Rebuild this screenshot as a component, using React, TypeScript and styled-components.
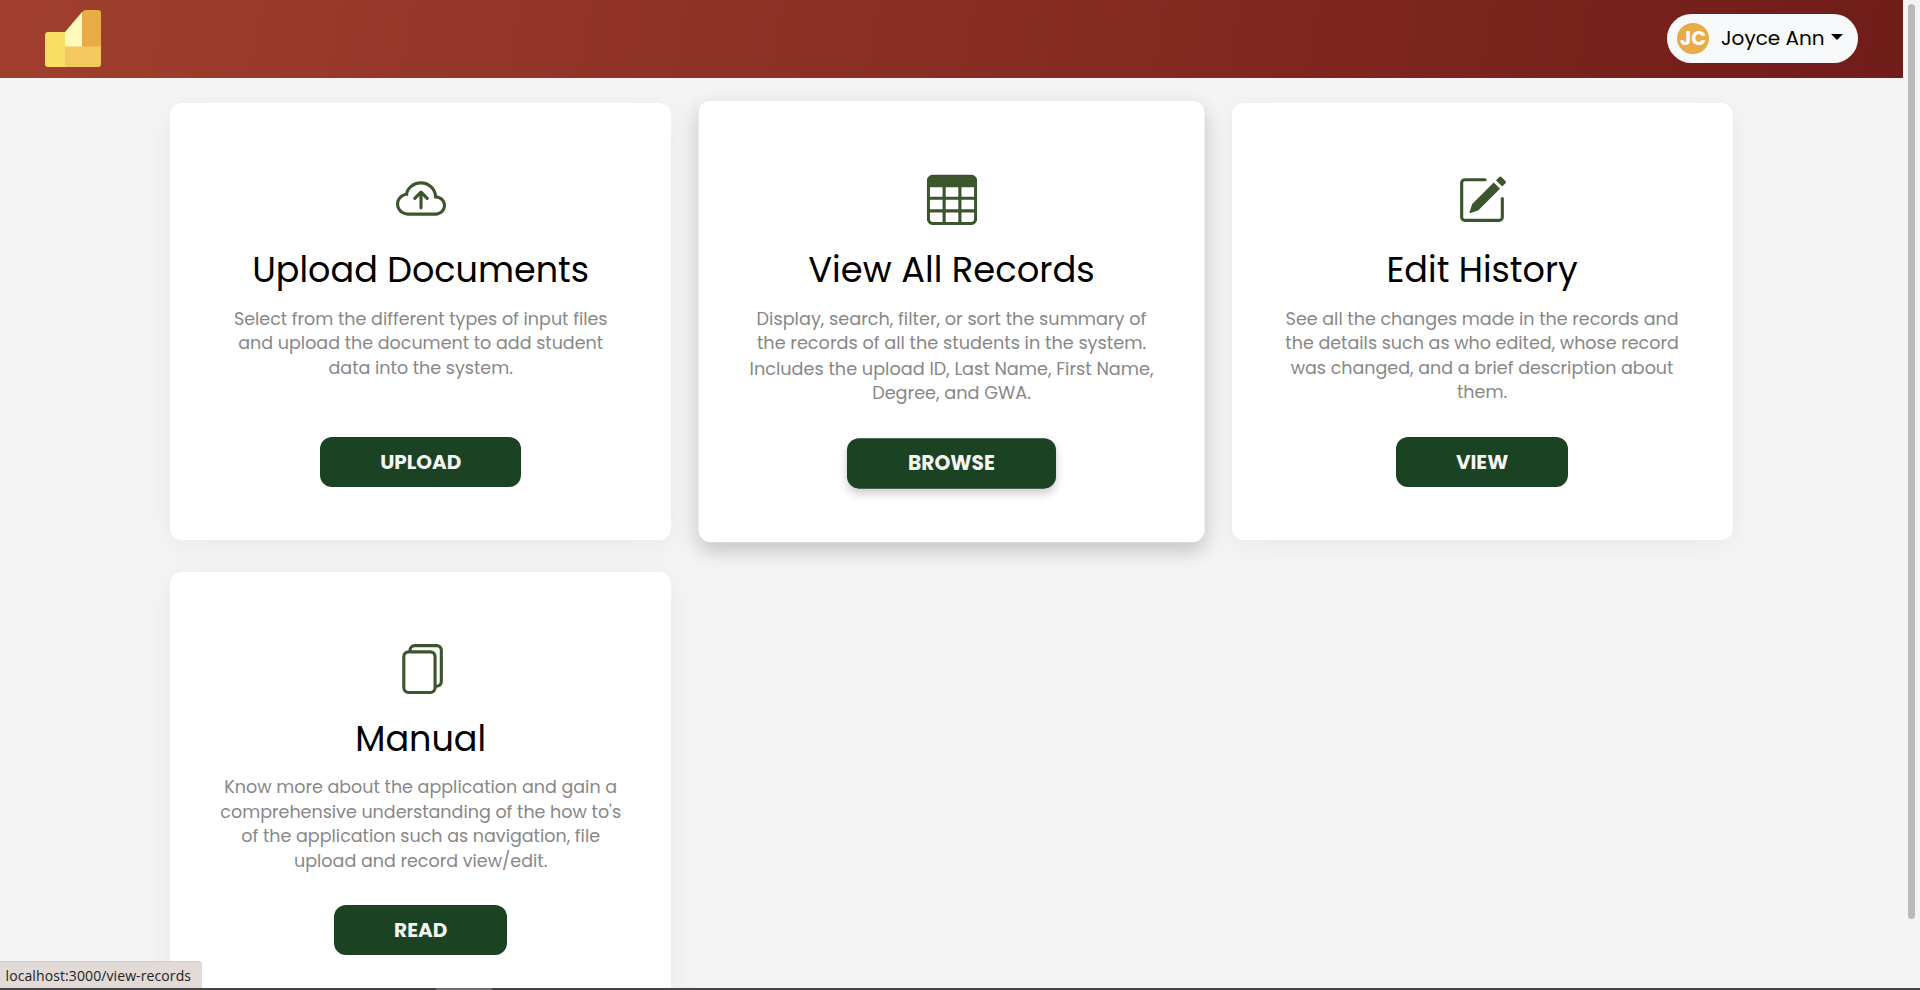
import React from "react";
import styled, { createGlobalStyle, css } from "styled-components";
import type { IconType } from "react-icons";
import { BsCloudArrowUp, BsFiles, BsPencilSquare, BsTable } from "react-icons/bs";

const GlobalStyle = createGlobalStyle`
  *, *::before, *::after { box-sizing: border-box; }
  html, body { height: 100%; overflow: hidden; }
  body {
    margin: 0;
    background: #f4f4f4;
    font-family: Poppins, Inter, "Liberation Sans", sans-serif;
    color: #000;
  }
`;

const Window = styled.div`
  position: relative;
  display: flex;
  flex-direction: column;
  height: 990px;
  overflow: hidden;
`;

const Viewport = styled.div`
  display: flex;
  flex: 1;
  min-height: 0;
`;

const Page = styled.div`
  flex: 1;
  min-width: 0;
  overflow: hidden;
`;

const ScrollTrack = styled.div`
  width: 17px;
  padding: 4px 5px 0;
`;

const ScrollThumb = styled.div`
  height: 915px;
  border-radius: 4px;
  background: #bababb;
`;

const Header = styled.header`
  display: flex;
  align-items: center;
  justify-content: space-between;
  height: 78px;
  padding: 0 45px 1px;
  background: linear-gradient(100deg, #a03f2d 0%, #701c19 100%);
`;

const Logo = styled.svg`
  display: block;
  width: 56px;
  height: 57px;
`;

const UserMenu = styled.button`
  display: flex;
  align-items: center;
  width: 191px;
  height: 49px;
  padding: 0 12px 0 10px;
  border: 0;
  border-radius: 25px;
  background: #f8f9fa;
  font: inherit;
  color: #000;
`;

const Avatar = styled.span`
  display: flex;
  flex: none;
  align-items: center;
  justify-content: center;
  width: 32px;
  height: 31px;
  margin-right: 12px;
  border-radius: 50%;
  background: #e8ab48;
  color: #fff;
  font-size: 19.5px;
  font-weight: 700;
`;

const UserName = styled.span`
  padding-bottom: 2px;
  font-size: 20px;
  line-height: 30px;
  white-space: nowrap;
`;

const Caret = styled.span`
  margin: -4px 0 0 6px;
  border-top: 6px solid #000;
  border-right: 6px solid transparent;
  border-left: 6px solid transparent;
`;

const Grid = styled.main`
  display: grid;
  grid-template-columns: repeat(3, 501px);
  gap: 32px 29.7px;
  padding: 25.4px 0 40px 170.2px;
`;

const Card = styled.article<{ $raised?: boolean }>`
  display: flex;
  flex-direction: column;
  align-items: center;
  height: 436.5px;
  padding-top: 72px;
  border-radius: 12px;
  background: #fff;
  box-shadow: 0 5px 30px rgba(0, 0, 0, 0.05);
  ${(p) =>
    p.$raised &&
    css`
      transform: scale(1.01);
      box-shadow: 0 8px 20px rgba(0, 0, 0, 0.2);
    `}
`;

const IconBox = styled.div<{ $raised?: boolean }>`
  height: 50px;
  color: #3b562c;
  font-size: 50px;
  line-height: 0;
  ${(p) => p.$raised && "padding-top: 0.8px;"}
`;

const Title = styled.h2`
  margin: 23px 0 0;
  font-size: 35px;
  font-weight: 400;
  line-height: 44px;
  white-space: nowrap;
`;

const Description = styled.p`
  width: 402px;
  height: 98px;
  margin: 14.6px 0 0;
  color: #878787;
  font-size: 17.5px;
  line-height: 24.5px;
  text-align: center;
`;

const Action = styled.a<{ $raised?: boolean }>`
  height: 50px;
  margin-top: 32px;
  padding: 0 60px;
  border-radius: 12px;
  background: #1b4323;
  color: #f4f4f4;
  font-size: 20px;
  font-weight: 700;
  line-height: 51px;
  text-decoration: none;
  box-shadow: ${(p) => (p.$raised ? "0 5px 10px rgba(0, 0, 0, 0.2)" : "none")};
`;

const StatusBubble = styled.div`
  position: absolute;
  bottom: 2px;
  left: 0;
  width: 202px;
  height: 27px;
  padding-left: 5.5px;
  border-top: 1px solid #d3cdca;
  border-radius: 0 4px 0 0;
  background: #e2dad7;
  color: #222;
  font-family: "Open Sans", sans-serif;
  font-size: 14px;
  line-height: 27px;
  letter-spacing: 0.1px;
  white-space: nowrap;
`;

const BottomEdge = styled.div`
  display: flex;
  height: 2px;
  padding-left: 436px;
  background: #454546;
`;

const EdgeTab = styled.div`
  width: 56px;
  background: #6c6c6d;
`;

interface CardData {
  icon: IconType;
  title: string;
  text: string;
  action: string;
  raised?: boolean;
}

const cards: CardData[] = [
  {
    icon: BsCloudArrowUp,
    title: "Upload Documents",
    text: "Select from the different types of input files and upload the document to add student data into the system.",
    action: "UPLOAD",
  },
  {
    icon: BsTable,
    title: "View All Records",
    text: "Display, search, filter, or sort the summary of the records of all the students in the system. Includes the upload ID, Last Name, First Name, Degree, and GWA.",
    action: "BROWSE",
    raised: true,
  },
  {
    icon: BsPencilSquare,
    title: "Edit History",
    text: "See all the changes made in the records and the details such as who edited, whose record was changed, and a brief description about them.",
    action: "VIEW",
  },
  {
    icon: BsFiles,
    title: "Manual",
    text: "Know more about the application and gain a comprehensive understanding of the how to's of the application such as navigation, file upload and record view/edit.",
    action: "READ",
  },
];

export default function App() {
  return (
    <>
      <GlobalStyle />
      <Window>
        <Viewport>
          <Page>
            <Header>
              <Logo viewBox="0 0 56 57">
                <path d="M3 22H20V57H3Q0 57 0 54V25Q0 22 3 22Z" fill="#f9de66" />
                <path d="M20 22L37 2V37H20Z" fill="#fff9bd" />
                <path d="M37 2Q39 0 41 0H53Q56 0 56 3V37H37Z" fill="#e8ab48" />
                <path d="M20 36.5H56V54Q56 57 53 57H20Z" fill="#f3c95f" />
              </Logo>
              <UserMenu>
                <Avatar>JC</Avatar>
                <UserName>Joyce Ann</UserName>
                <Caret />
              </UserMenu>
            </Header>
            <Grid>
              {cards.map(({ icon: Icon, title, text, action, raised }) => (
                <Card key={title} $raised={raised}>
                  <IconBox $raised={raised}>
                    <Icon />
                  </IconBox>
                  <Title>{title}</Title>
                  <Description>{text}</Description>
                  <Action $raised={raised}>{action}</Action>
                </Card>
              ))}
            </Grid>
          </Page>
          <ScrollTrack>
            <ScrollThumb />
          </ScrollTrack>
        </Viewport>
        <BottomEdge>
          <EdgeTab />
        </BottomEdge>
        <StatusBubble>localhost:3000/view-records</StatusBubble>
      </Window>
    </>
  );
}
